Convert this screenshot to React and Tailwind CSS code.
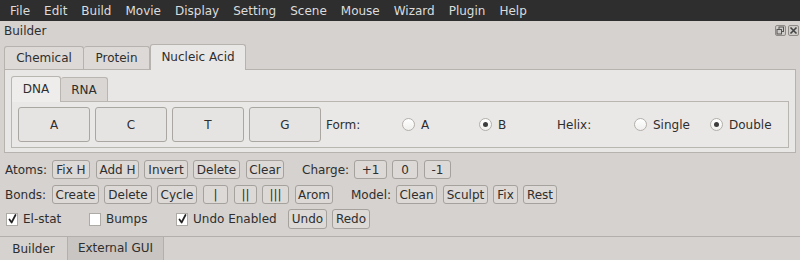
import React from "react";

const menu = ["File", "Edit", "Build", "Movie", "Display", "Setting", "Scene", "Mouse", "Wizard", "Plugin", "Help"];

function Btn({ children, cls }) {
  return (
    <div className={"flex items-center justify-center rounded-[3px] border border-[#a5a19d] bg-[#dcd9d6] text-[#2e2e2e] " + cls}>
      {children}
    </div>
  );
}

function BigBtn({ children }) {
  return (
    <div className="flex h-[35px] w-[72px] items-center justify-center rounded-[3px] border border-[#aaa6a2] bg-[#e6e4e2] text-[#2e2e2e]">
      {children}
    </div>
  );
}

function Radio({ checked, label, cls }) {
  return (
    <div className={"flex items-center gap-[6px] " + cls}>
      <div className="flex h-[13px] w-[13px] items-center justify-center rounded-full border border-[#b3afab] bg-gradient-to-b from-[#ffffff] to-[#f0efee]">
        {checked && <div className="h-[5px] w-[5px] rounded-full bg-[#3c3c3c]" />}
      </div>
      <span>{label}</span>
    </div>
  );
}

function Check({ checked, label, cls }) {
  return (
    <div className={"flex items-center gap-[5px] " + cls}>
      <div className="flex h-[13px] w-[12px] items-center justify-center border border-[#aeaaa6] bg-white">
        {checked && (
          <svg width="9" height="10" viewBox="0 0 9 10">
            <path d="M1.5 5.5 L3.6 8.5 L7.5 1" stroke="#222" strokeWidth="1.7" fill="none" strokeLinecap="round" strokeLinejoin="round" />
          </svg>
        )}
      </div>
      <span>{label}</span>
    </div>
  );
}

export default function App() {
  return (
    <div className="flex h-[260px] w-[800px] flex-col overflow-hidden bg-[#d6d2cf] text-[12px] leading-[14px] text-[#2e2e2e]" style={{ fontFamily: '"DejaVu Sans", "Liberation Sans", sans-serif' }}>
      {/* menu */}
      <div className="flex h-[21px] items-center bg-[#2e2e2e] pl-[3px] text-[#dcdcdc]">
        {menu.map((m) => (
          <span key={m} className="px-[7px]">{m}</span>
        ))}
      </div>

      {/* title */}
      <div className="flex h-[23px] items-start justify-between pl-[4px] pr-[1px] pt-[3px]">
        <span>Builder</span>
        <div className="flex gap-[2px] pt-[1px]">
          <div className="flex h-[11px] w-[11px] items-center justify-center rounded-[2px] border border-[#8e8a86] bg-[#cfcbc8]">
            <svg width="9" height="9" viewBox="0 0 9 9">
              <rect x="3" y="1" width="4.5" height="4.5" fill="none" stroke="#555" strokeWidth="1" />
              <rect x="1" y="3.5" width="4.5" height="4.5" fill="#cfcbc8" stroke="#555" strokeWidth="1" />
            </svg>
          </div>
          <div className="flex h-[11px] w-[11px] items-center justify-center rounded-[2px] border border-[#8e8a86] bg-[#cfcbc8]">
            <svg width="9" height="9" viewBox="0 0 9 9">
              <path d="M1.5 1.5 L7.5 7.5 M7.5 1.5 L1.5 7.5" stroke="#444" strokeWidth="1.6" />
            </svg>
          </div>
        </div>
      </div>

      {/* outer tabs */}
      <div className="mx-[4px] flex h-[25px] items-end">
        <div className="flex h-[23px] w-[80px] items-center justify-center rounded-t-[3px] border border-b-0 border-[#b6b2ae] bg-[#dcd9d6]">Chemical</div>
        <div className="flex h-[23px] w-[66px] items-center justify-center rounded-t-[3px] border border-b-0 border-l-0 border-[#b6b2ae] bg-[#dcd9d6]">Protein</div>
        <div className="relative top-[1px] flex h-[26px] w-[96px] items-center justify-center rounded-t-[3px] border border-b-0 border-[#b6b2ae] bg-[#e9e7e5] pb-[2px]">Nucleic Acid</div>
      </div>

      {/* outer panel */}
      <div className="mx-[4px] flex h-[84px] flex-col border border-[#b6b2ae] bg-[#e9e7e5] px-[6px] pt-[5px]">
        <div className="flex h-[26px] items-end">
          <div className="relative top-[1px] flex h-[26px] w-[50px] items-center justify-center rounded-t-[3px] border border-b-0 border-[#b9b5b1] bg-[#eeedeb] pb-[2px]">DNA</div>
          <div className="flex h-[24px] w-[47px] items-center justify-center rounded-t-[3px] border border-b-0 border-l-0 border-[#b9b5b1] bg-[#d9d6d3]">RNA</div>
        </div>
        <div className="flex h-[47px] items-center border border-[#b9b5b1] bg-[#eae8e6] px-[6px]">
          <div className="flex gap-[5px]">
            <BigBtn>A</BigBtn>
            <BigBtn>C</BigBtn>
            <BigBtn>T</BigBtn>
            <BigBtn>G</BigBtn>
          </div>
          <span className="ml-[5px] w-[76px]">Form:</span>
          <Radio label="A" cls="w-[77px]" />
          <Radio label="B" checked cls="w-[78px]" />
          <span className="w-[77px]">Helix:</span>
          <Radio label="Single" cls="w-[76px]" />
          <Radio label="Double" checked cls="" />
        </div>
      </div>

      {/* atoms */}
      <div className="mt-[7px] flex h-[19px] items-center pl-[5px]">
        <span className="w-[47px]">Atoms:</span>
        <Btn cls="h-[19px] w-[38px]">Fix H</Btn>
        <Btn cls="ml-[6px] h-[19px] w-[43px]">Add H</Btn>
        <Btn cls="ml-[5px] h-[19px] w-[44px]">Invert</Btn>
        <Btn cls="ml-[5px] h-[19px] w-[47px]">Delete</Btn>
        <Btn cls="ml-[6px] h-[19px] w-[38px]">Clear</Btn>
        <span className="ml-[18px] w-[52px]">Charge:</span>
        <Btn cls="h-[19px] w-[33px]">+1</Btn>
        <Btn cls="ml-[5px] h-[19px] w-[26px]">0</Btn>
        <Btn cls="ml-[6px] h-[19px] w-[27px]">-1</Btn>
      </div>

      {/* bonds */}
      <div className="mt-[6px] flex h-[19px] items-center pl-[5px]">
        <span className="w-[47px]">Bonds:</span>
        <Btn cls="h-[19px] w-[47px]">Create</Btn>
        <Btn cls="ml-[5px] h-[19px] w-[48px]">Delete</Btn>
        <Btn cls="ml-[5px] h-[19px] w-[40px]">Cycle</Btn>
        <Btn cls="ml-[6px] h-[19px] w-[25px]">|</Btn>
        <Btn cls="ml-[6px] h-[19px] w-[23px]">||</Btn>
        <Btn cls="ml-[5px] h-[19px] w-[27px]">|||</Btn>
        <Btn cls="ml-[6px] h-[19px] w-[38px]">Arom</Btn>
        <span className="ml-[18px] w-[45px]">Model:</span>
        <Btn cls="h-[19px] w-[41px]">Clean</Btn>
        <Btn cls="ml-[6px] h-[19px] w-[45px]">Sculpt</Btn>
        <Btn cls="ml-[5px] h-[19px] w-[25px]">Fix</Btn>
        <Btn cls="ml-[5px] h-[19px] w-[34px]">Rest</Btn>
      </div>

      {/* checks */}
      <div className="mt-[5px] flex h-[20px] items-center pl-[6px]">
        <Check checked label="El-stat" cls="w-[83px]" />
        <Check label="Bumps" cls="w-[87px]" />
        <Check checked label="Undo Enabled" cls="w-[112px]" />
        <Btn cls="h-[20px] w-[39px]">Undo</Btn>
        <Btn cls="ml-[5px] h-[20px] w-[38px]">Redo</Btn>
      </div>

      {/* bottom tabs */}
      <div className="mt-[7px] flex h-[24px] border-t border-[#b3afab]">
        <div className="flex w-[67px] items-center justify-center pt-[1px]">Builder</div>
        <div className="flex w-[97px] items-center justify-center border-x border-[#b3afab] bg-[#c9c5c2] pb-[2px]">External GUI</div>
      </div>
    </div>
  );
}
